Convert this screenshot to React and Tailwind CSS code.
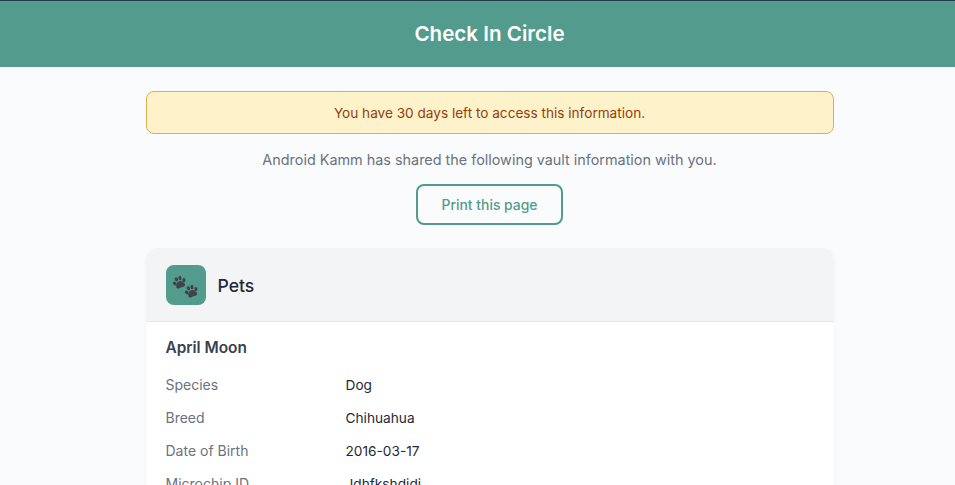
const pets = [
  { label: 'Species', value: 'Dog' },
  { label: 'Breed', value: 'Chihuahua' },
  { label: 'Date of Birth', value: '2016-03-17' },
  { label: 'Microchip ID', value: 'Jdhfkshdidi' },
];

function Paw({ className }) {
  return (
    <svg viewBox="0 0 20 20" className={className} fill="#3f4448">
      <ellipse cx="3.6" cy="9" rx="2.1" ry="2.8" transform="rotate(-25 3.6 9)" />
      <ellipse cx="7.6" cy="4.6" rx="2.1" ry="2.9" transform="rotate(-8 7.6 4.6)" />
      <ellipse cx="12.6" cy="4.6" rx="2.1" ry="2.9" transform="rotate(8 12.6 4.6)" />
      <ellipse cx="16.6" cy="9" rx="2.1" ry="2.8" transform="rotate(25 16.6 9)" />
      <path d="M10 8.2c2.9 0 6 3.4 6 6.2 0 2.2-1.8 3-3.3 2.7-1.8-.3-3.6-.3-5.4 0C5.800 17.400 4 16.600 4 14.400c0-2.800 3.100-6.200 6-6.200z" />
    </svg>
  );
}

export default function App() {
  return (
    <div className="h-[485px] overflow-hidden bg-[#fafbfd] font-['Inter',sans-serif]">
      <div className="w-[979px]">
        <header className="h-[67px] border-t border-[#1f3d44] bg-[#529b8d] flex items-center justify-center">
          <h1 className="text-[20.6px] font-semibold text-white">Check In Circle</h1>
        </header>

        <main className="w-[720px] mx-auto px-4 pt-6">
          <div className="h-[43px] pt-px flex items-center justify-center bg-[#fdf2c9] border border-[#e0ae52] rounded-lg text-[13.6px] text-[#92400e]">
            You have 30 days left to access this information.
          </div>

          <p className="mt-4 text-center text-[14.4px] leading-5 text-[#6b7280]">
            Android Kamm has shared the following vault information with you.
          </p>

          <div className="mt-[14px] flex justify-center">
            <button className="w-[147px] h-[41px] pt-px border-2 border-[#529b8d] rounded-lg text-[13.9px] font-medium text-[#529b8d]">
              Print this page
            </button>
          </div>

          <section className="mt-[23px] bg-white rounded-xl shadow-[0_1px_3px_rgba(0,0,0,0.05)] overflow-hidden">
            <div className="h-[74px] px-5 pt-px flex items-center gap-3 bg-[#f3f4f6] border-b border-[#e5e7eb]">
              <div className="w-10 h-10 rounded-lg bg-[#529b8d] relative">
                <Paw className="absolute left-[6px] top-[10px] w-[15px] h-[15px] -rotate-[20deg]" />
                <Paw className="absolute left-[18px] top-[19px] w-[15px] h-[15px] -rotate-[20deg]" />
              </div>
              <h2 className="pt-[2px] text-[17.6px] font-medium text-[#1f2937]">Pets</h2>
            </div>
            <div className="px-5 pt-[17px]">
              <h3 className="text-[15.4px] leading-[18px] font-semibold text-[#374151] mb-[11px]">April Moon</h3>
              {pets.map((row) => (
                <div key={row.label} className="flex h-[33px] items-center">
                  <span className="w-[180px] text-[14px] text-[#6b7280]">{row.label}</span>
                  <span className="pt-px text-[13.7px] text-[#1f2937]">{row.value}</span>
                </div>
              ))}
            </div>
          </section>
        </main>
      </div>
    </div>
  );
}
